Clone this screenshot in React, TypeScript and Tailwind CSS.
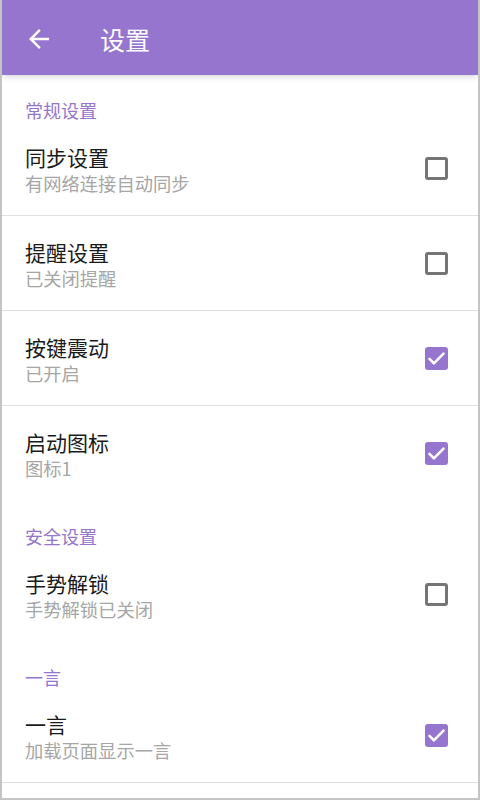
import React from 'react';

type Item = { title: string; desc: string; checked: boolean; divider: boolean };
type Section = { name: string; items: Item[] };

const sections: Section[] = [
  {
    name: '常规设置',
    items: [
      { title: '同步设置', desc: '有网络连接自动同步', checked: false, divider: true },
      { title: '提醒设置', desc: '已关闭提醒', checked: false, divider: true },
      { title: '按键震动', desc: '已开启', checked: true, divider: true },
      { title: '启动图标', desc: '图标1', checked: true, divider: false },
    ],
  },
  {
    name: '安全设置',
    items: [{ title: '手势解锁', desc: '手势解锁已关闭', checked: false, divider: false }],
  },
  {
    name: '一言',
    items: [{ title: '一言', desc: '加载页面显示一言', checked: true, divider: true }],
  },
];

function Checkbox({ checked }: { checked: boolean }) {
  if (checked) {
    return (
      <div className="w-[23px] h-[23px] rounded-[3px] bg-[#9575cd] flex items-center justify-center">
        <svg width="21" height="21" viewBox="0 0 24 24" fill="none">
          <path d="M4 12.5l5 5L20 6.5" stroke="#fff" strokeWidth={3} strokeLinecap="round" strokeLinejoin="round" />
        </svg>
      </div>
    );
  }
  return <div className="w-[23px] h-[23px] rounded-[3px] border-[3px] border-[#757575]" />;
}

function SettingRow({ item }: { item: Item }) {
  return (
    <div
      className={`h-[95px] flex items-center pl-[23px] pr-[30px] ${item.divider ? 'border-b border-[#e0e0e0]' : ''}`}
    >
      <div className="flex-1 flex flex-col pt-[3px]">
        <span className="text-[21px] leading-[26px] text-[#1a1a1a]">{item.title}</span>
        <span className="text-[18.3px] leading-[26px] text-[#a6a6a6]">{item.desc}</span>
      </div>
      <Checkbox checked={item.checked} />
    </div>
  );
}

export default function App() {
  return (
    <div
      className="w-[480px] h-[800px] overflow-hidden bg-white border-x-2 border-b-2 border-[#c4c4c4] flex flex-col"
      style={{ fontFamily: '"Noto Sans CJK SC", "Noto Sans", sans-serif' }}
    >
      <header className="h-[75px] shrink-0 bg-[#9575cd] flex items-center shadow-md relative z-10">
        <svg className="ml-[22px] mt-[2px]" width="30" height="30" viewBox="0 0 24 24" fill="#fff">
          <path d="M20 11H7.83l5.59-5.59L12 4l-8 8 8 8 1.41-1.41L7.83 13H20v-2z" />
        </svg>
        <h1 className="ml-[46px] mt-[4px] text-[25px] text-white leading-none">设置</h1>
      </header>

      <div className="flex-1">
        {sections.map((s) => (
          <div key={s.name}>
            <div className="h-[46px] pt-[24px] pl-[23px]">
              <span className="block text-[18px] leading-[22px] text-[#9575cd]">{s.name}</span>
            </div>
            {s.items.map((it) => (
              <SettingRow key={it.title} item={it} />
            ))}
          </div>
        ))}
      </div>
    </div>
  );
}
